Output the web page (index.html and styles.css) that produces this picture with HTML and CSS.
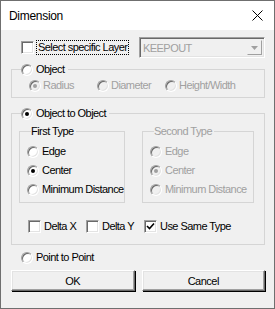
FILE: index.html
```html
<!DOCTYPE html>
<html>
<head>
<meta charset="utf-8">
<link rel="stylesheet" href="styles.css">
</head>
<body>
<div class="window">
  <div class="titlebar">
    <span class="title">Dimension</span>
    <svg class="close" width="11" height="11" viewBox="0 0 11 11"><path d="M0.5 0.5 L10.5 10.5 M10.5 0.5 L0.5 10.5" stroke="#000" stroke-width="1"/></svg>
  </div>
  <div class="client">
    <div class="row-layer">
      <label class="ctl">
        <span class="cb"></span>
        <span class="focus">Select specific Layer</span>
      </label>
      <div class="combo">
        <span class="combo-text">KEEPOUT</span>
        <span class="combo-btn"><svg width="7" height="4" viewBox="0 0 7 4"><path d="M0 0 H7 L3.5 4 Z" fill="#a0a0a0"/></svg></span>
      </div>
    </div>

    <fieldset class="group g-object">
      <legend class="legend-radio"><span class="rb"></span><span>Object</span></legend>
      <div class="row-sub">
        <span class="ctl dis"><span class="rb dis on"></span>Radius</span>
        <span class="ctl dis"><span class="rb dis"></span>Diameter</span>
        <span class="ctl dis"><span class="rb dis"></span>Height/Width</span>
      </div>
    </fieldset>

    <fieldset class="group g-oto">
      <legend class="legend-radio"><span class="rb on"></span><span>Object to Object</span></legend>
      <div class="types">
        <fieldset class="group g-type">
          <legend class="legend-text">First Type</legend>
          <div class="ctl"><span class="rb"></span>Edge</div>
          <div class="ctl"><span class="rb on"></span>Center</div>
          <div class="ctl"><span class="rb"></span>Minimum Distance</div>
        </fieldset>
        <fieldset class="group g-type g-second dis">
          <legend class="legend-text">Second Type</legend>
          <div class="ctl"><span class="rb dis"></span>Edge</div>
          <div class="ctl"><span class="rb dis on"></span>Center</div>
          <div class="ctl"><span class="rb dis"></span>Minimum Distance</div>
        </fieldset>
      </div>
      <div class="row-checks">
        <span class="ctl"><span class="cb"></span>Delta X</span>
        <span class="ctl"><span class="cb"></span>Delta Y</span>
        <span class="ctl wide"><span class="cb checked"><svg width="9" height="9" viewBox="0 0 9 9"><path d="M1 4 L3.5 6.5 L8 1.5" fill="none" stroke="#000" stroke-width="1.6"/></svg></span>Use Same Type</span>
      </div>
    </fieldset>

    <div class="row-ptp">
      <span class="ctl"><span class="rb"></span>Point to Point</span>
    </div>

    <div class="buttons">
      <button class="btn">OK</button>
      <button class="btn">Cancel</button>
    </div>
  </div>
</div>
</body>
</html>
```
FILE: styles.css
```css
* { box-sizing: border-box; }
html, body { margin: 0; padding: 0; background: #f0f0f0; }
body {
  font-family: Tahoma, "Liberation Sans", Arial, sans-serif;
  font-size: 11px;
  letter-spacing: -0.55px;
  color: #000;
}
.window {
  width: 275px;
  height: 309px;
  border: 1px solid #6f6f6f;
  background: #f0f0f0;
  display: flex;
  flex-direction: column;
}
.titlebar {
  height: 29px;
  background: #fff;
  display: flex;
  align-items: center;
  justify-content: space-between;
  padding: 0 11px 0 8px;
  flex: none;
}
.title {
  font-size: 12px;
  letter-spacing: -0.3px;
  font-family: "Liberation Sans", Arial, sans-serif;
  margin-top: 1px;
}
.close { display: block; }
.client {
  padding: 7px 9px 0 10px;
  flex: 1;
}
.ctl {
  display: inline-flex;
  align-items: center;
  white-space: nowrap;
  height: 13px;
  line-height: 13px;
}
.dis { color: #a0a0a0; }
.rb {
  display: inline-block;
  width: 12px;
  height: 12px;
  border-radius: 50%;
  margin-right: 3px;
  background: #fff;
  border: 1px solid;
  border-color: #a0a0a0 #fff #fff #a0a0a0;
  box-shadow: inset 1px 1px 0 #696969, inset -1px -1px 0 #e3e3e3;
  position: relative;
  flex: none;
}
.rb.on::after {
  content: "";
  position: absolute;
  left: 3px;
  top: 3px;
  width: 4px;
  height: 4px;
  border-radius: 50%;
  background: #000;
}
.rb.dis { background: #f0f0f0; }
.rb.dis.on::after { background: #a0a0a0; }
.cb {
  display: inline-flex;
  align-items: center;
  justify-content: center;
  width: 13px;
  height: 13px;
  margin-right: 3px;
  background: #fff;
  border: 1px solid;
  border-color: #a0a0a0 #fff #fff #a0a0a0;
  box-shadow: inset 1px 1px 0 #696969, inset -1px -1px 0 #e3e3e3;
  flex: none;
}
.row-layer {
  display: flex;
  align-items: center;
  height: 21px;
  padding-left: 10px;
}
.focus {
  outline: 1px dotted #000;
  outline-offset: 0;
  padding: 0 1px 0 1px;
}
.combo {
  margin-left: auto;
  width: 126px;
  height: 21px;
  border: 1px solid;
  border-color: #a0a0a0 #fff #fff #a0a0a0;
  box-shadow: inset 1px 1px 0 #696969, inset -1px -1px 0 #e3e3e3;
  display: flex;
  align-items: center;
  justify-content: space-between;
  padding: 0 2px 0 3px;
  color: #a0a0a0;
  background: #f0f0f0;
}
.combo-btn {
  width: 15px;
  height: 15px;
  border: 1px solid;
  border-color: #f0f0f0 #a0a0a0 #a0a0a0 #f0f0f0;
  display: flex;
  align-items: center;
  justify-content: center;
}
.group {
  border: 1px solid #d5d5d5;
  margin: 0;
  padding: 0;
  min-width: 0;
}
.group legend {
  padding: 0 3px 0 0;
  margin-left: 9px;
  line-height: 13px;
  height: 13px;
}
.legend-radio { display: flex; align-items: center; }
.legend-radio .rb { margin-right: 3px; }
.g-object {
  margin-top: 5px;
  height: 35px;
  width: 254px;
}
.row-sub {
  display: flex;
  padding: 3px 0 0 17px;
}
.row-sub .ctl { width: 68px; }
.row-sub .ctl .rb { margin-right: 2px; }
.g-oto {
  margin-top: 9px;
  width: 254px;
  padding-bottom: 11px;
}
.types {
  display: flex;
  padding: 5px 0 0 7px;
  gap: 17px;
}
.g-type {
  width: 106px;
  height: 78px;
  padding: 4px 0 0 7px;
}
.g-type legend { margin-left: 4px; padding: 0 2px 0 0; }
.g-second { width: 112px; }
.g-type .ctl { display: flex; height: 19px; }
.g-type .ctl .rb { margin-right: 3px; }
.row-checks {
  display: flex;
  padding: 17px 0 0 16px;
}
.row-checks .ctl { width: 58px; }
.row-checks .ctl.wide { width: auto; }
.row-ptp {
  display: flex;
  padding: 6px 0 0 10px;
}
.buttons {
  display: flex;
  gap: 7px;
  margin-top: 6px;
}
.btn {
  width: 124px;
  height: 21px;
  font-family: inherit;
  font-size: 11px;
  letter-spacing: -0.5px;
  background: #f0f0f0;
  border: 1px solid;
  border-color: #fff #696969 #696969 #fff;
  box-shadow: 1px 1px 0 #000, inset -1px -1px 0 #a0a0a0, inset 1px 1px 0 #e3e3e3;
  padding: 0;
  color: #000;
}
```
